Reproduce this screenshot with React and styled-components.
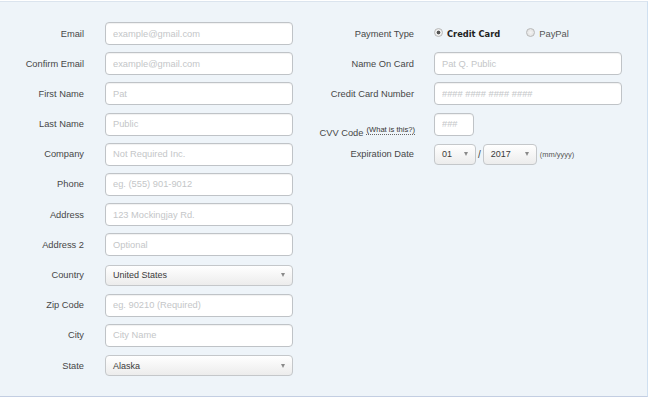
import React from 'react';
import styled, { createGlobalStyle } from 'styled-components';

const GlobalStyle = createGlobalStyle`
    html, body {
        margin: 0;
        padding: 0;
        background: #ffffff;
    }
    body {
        font-family: "Liberation Sans", Arial, sans-serif;
    }
`;

// le fond bleu clair qui entoure tout le formulaire
const Page = styled.div`
    box-sizing: border-box;
    width: 648px;
    height: 396px;
    margin-top: 1px;
    background: #eef4f9;
    border-top: 1px solid #dbe4ee;
    border-right: 1px solid #cfe0f1;
    border-bottom: 1px solid #c3cee2;
    display: flex;
    padding-top: 20px;
`;

const Column = styled.div`
    display: flex;
    flex-direction: column;
    gap: 7.2px;
    width: ${(p) => p.$width}px;
`;

const Row = styled.div`
    display: grid;
    grid-template-columns: ${(p) => p.$label}px 1fr;
    column-gap: ${(p) => p.$gap}px;
    align-items: center;
    height: 23px;
`;

const Label = styled.label`
    text-align: right;
    font-size: 9.3px;
    color: #474747;
    white-space: nowrap;
`;

const Input = styled.input`
    box-sizing: border-box;
    width: ${(p) => p.$width || 188}px;
    height: 23px;
    padding: 0 7px;
    border: 1px solid #bfc3c7;
    border-radius: 4px;
    background: #fff;
    box-shadow: inset 0 1px 1px rgba(0, 0, 0, 0.06);
    font-family: "Liberation Sans", Arial, sans-serif;
    font-size: 9.3px;
    color: #333;
    outline: none;
    &::placeholder {
        color: #c4c6c8;
    }
`;

const Select = styled.div`
    box-sizing: border-box;
    width: ${(p) => p.$width || 188}px;
    height: 21px;
    padding: 0 7px;
    border: 1px solid #c4c7ca;
    border-radius: 4px;
    background: linear-gradient(#ffffff, #ececec);
    display: flex;
    align-items: center;
    justify-content: space-between;
    font-size: 9px;
    color: #3a3a3a;
    &::after {
        content: '';
        border-left: 2.5px solid transparent;
        border-right: 2.5px solid transparent;
        border-top: 4px solid #8a8a8a;
    }
`;

const Inline = styled.div`
    display: flex;
    align-items: center;
    gap: ${(p) => p.$gap || 4}px;
`;

const Radio = styled.span`
    box-sizing: border-box;
    width: 9px;
    height: 9px;
    border-radius: 50%;
    border: 1px solid #b8b8b8;
    background: radial-gradient(circle, ${(p) => (p.$checked ? '#555 0 1.6px, #eee 2.2px' : '#f4f4f4 0, #dcdcdc 100%')});
    margin-top: -2px;
`;

const RadioText = styled.span`
    font-size: ${(p) => (p.$bold ? 8.3 : 9.4)}px;
    font-weight: ${(p) => (p.$bold ? 'bold' : 'normal')};
    font-family: ${(p) => (p.$bold ? '"DejaVu Sans", Verdana, sans-serif' : '"Liberation Sans", Arial, sans-serif')};
    color: ${(p) => (p.$bold ? '#222' : '#555')};
    margin-right: ${(p) => (p.$bold ? 22 : 0)}px;
`;

const CvvLabel = styled(Label)`
    align-self: end;
    margin-bottom: -2px;
    margin-right: -1px;
`;

const Help = styled.span`
    font-size: 7.6px;
    color: #333;
    border-bottom: 1px dotted #666;
    vertical-align: 4px;
    margin-left: 3px;
`;

const Slash = styled.span`
    font-size: 10px;
    color: #444;
`;

const Hint = styled.span`
    font-size: 7.5px;
    color: #555;
    margin-left: 1px;
`;

const leftFields = [
    ['Email', 'example@gmail.com'],
    ['Confirm Email', 'example@gmail.com'],
    ['First Name', 'Pat'],
    ['Last Name', 'Public'],
    ['Company', 'Not Required Inc.'],
    ['Phone', 'eg. (555) 901-9012'],
    ['Address', '123 Mockingjay Rd.'],
    ['Address 2', 'Optional'],
    ['Country', null, 'United States'],
    ['Zip Code', 'eg. 90210 (Required)'],
    ['City', 'City Name'],
    ['State', null, 'Alaska'],
];

const App = () => {
    return (
        <>
            <GlobalStyle />
            <Page>
                <Column $width={300}>
                    {leftFields.map(([label, placeholder, value]) => (
                        <Row key={label} $label={84} $gap={21}>
                            <Label>{label}</Label>
                            {value ? <Select>{value}</Select> : <Input placeholder={placeholder} />}
                        </Row>
                    ))}
                </Column>
                <Column $width={340}>
                    <Row $label={114} $gap={20}>
                        <Label>Payment Type</Label>
                        <Inline>
                            <Radio $checked />
                            <RadioText $bold>Credit Card</RadioText>
                            <Radio />
                            <RadioText>PayPal</RadioText>
                        </Inline>
                    </Row>
                    <Row $label={114} $gap={20}>
                        <Label>Name On Card</Label>
                        <Input placeholder="Pat Q. Public" />
                    </Row>
                    <Row $label={114} $gap={20}>
                        <Label>Credit Card Number</Label>
                        <Input placeholder="#### #### #### ####" />
                    </Row>
                    <Row $label={114} $gap={20}>
                        <CvvLabel>
                            CVV Code<Help>(What is this?)</Help>
                        </CvvLabel>
                        <Input $width={40} placeholder="###" />
                    </Row>
                    <Row $label={114} $gap={20}>
                        <Label>Expiration Date</Label>
                        <Inline $gap={2}>
                            <Select $width={42}>01</Select>
                            <Slash>/</Slash>
                            <Select $width={54}>2017</Select>
                            <Hint>(mm/yyyy)</Hint>
                        </Inline>
                    </Row>
                </Column>
            </Page>
        </>
    );
};

export default App;
